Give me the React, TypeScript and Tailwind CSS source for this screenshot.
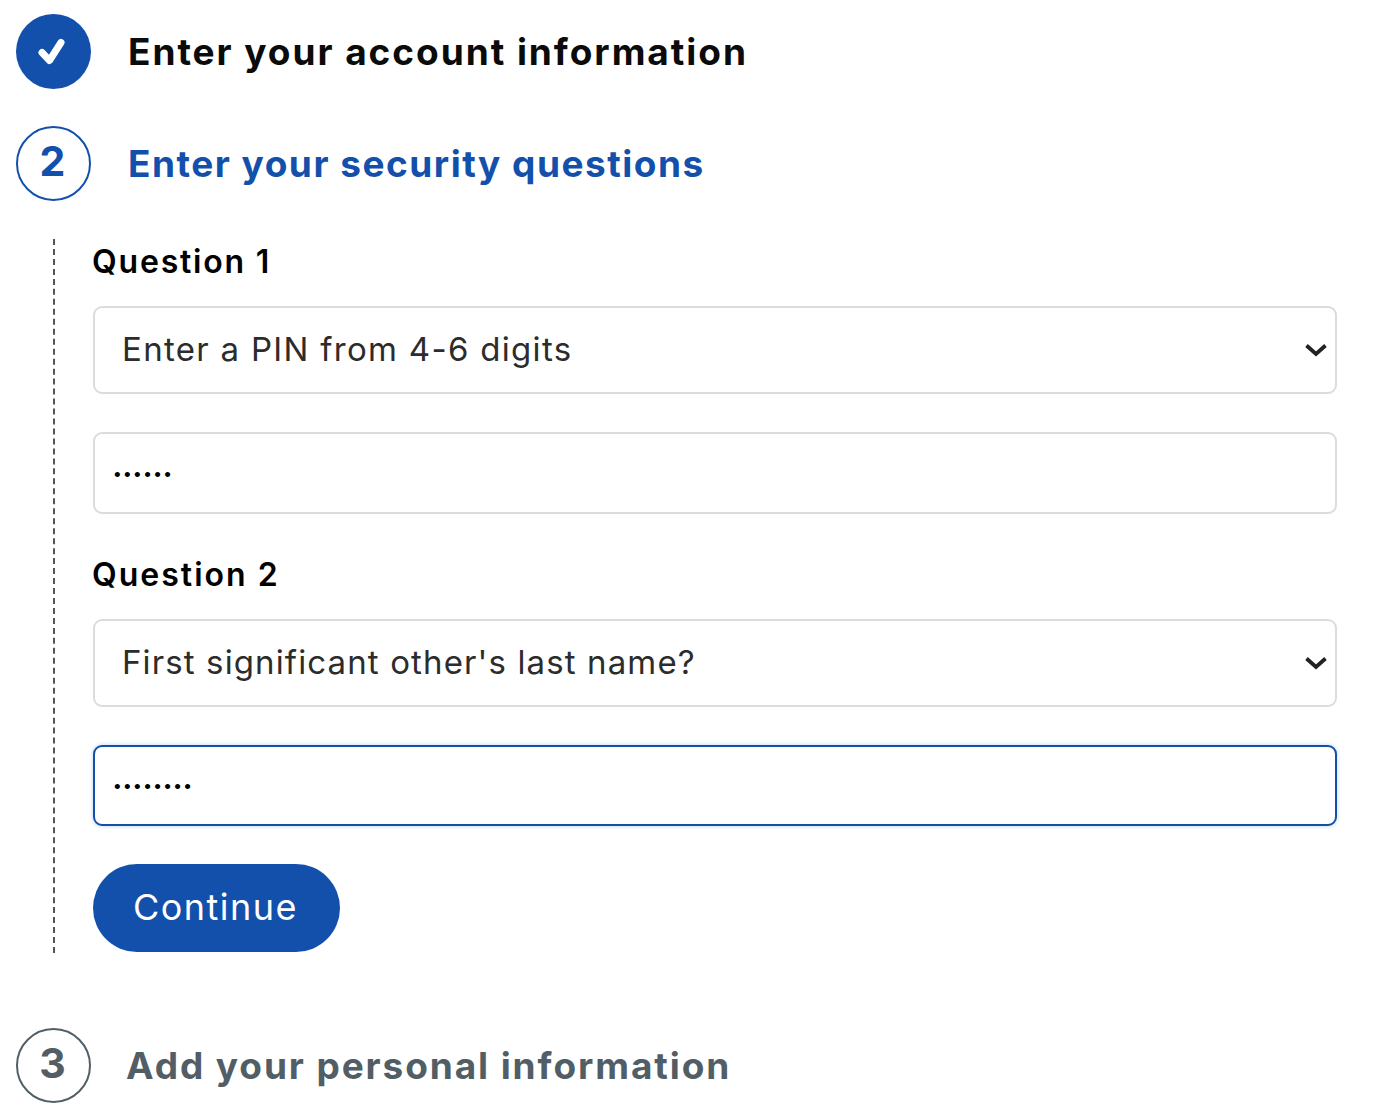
import React from "react";

const font = "font-['Inter','Liberation_Sans',sans-serif]";

function Chevron() {
  return (
    <svg className="absolute right-[10px] top-1/2 -translate-y-1/2 pointer-events-none" width="22" height="14" viewBox="0 0 22 14" fill="none">
      <path d="M1.5 2.5 L11 11 L20.5 2.5" stroke="#222" strokeWidth="3.8" />
    </svg>
  );
}

function Step({ mark, color, children }: { mark: React.ReactNode; color: string; children: string }) {
  return (
    <div className="flex items-center h-[75px]">
      {mark}
      <h2 className={`text-[37px] leading-none font-bold ${color}`}>{children}</h2>
    </div>
  );
}

function Question({ label, option, dots, focused, labelTracking, optionTracking, inputHeight }: { label: string; option: string; dots: string; focused?: boolean; labelTracking: string; optionTracking: string; inputHeight: string }) {
  return (
    <div className="flex flex-col">
      <label className={`text-[32px] leading-[40px] font-semibold text-black -ml-[1px] ${labelTracking}`}>{label}</label>
      <div className="relative mt-[24px] h-[88px]">
        <select
          defaultValue={option}
          className={`w-full h-full appearance-none bg-white border-2 border-[#dcdcdc] rounded-[9px] pl-[27px] text-[33px] text-[#2c2c2c] outline-none font-['Inter',sans-serif] ${optionTracking}`}
        >
          <option>{option}</option>
        </select>
        <Chevron />
      </div>
      <input
        type="password"
        defaultValue={dots}
        readOnly
        className={`mt-[38px] w-full bg-white rounded-[9px] pl-[19px] pt-[3px] text-[19px] tracking-[3.4px] text-black outline-none border-2 font-['Liberation_Sans',sans-serif] ${inputHeight} ${
          focused ? "border-[#1350ab] shadow-[0_0_4px_#bcd3f0]" : "border-[#dcdcdc]"
        }`}
      />
    </div>
  );
}

export default function App() {
  return (
    <div className={`w-[1388px] h-[1116px] bg-white overflow-hidden pl-[16px] pt-[14px] ${font}`}>
      <Step
        color="ml-[37px] text-[#0b0b0b] tracking-[1.95px]"
        mark={
          <div className="w-[75px] h-[75px] rounded-full bg-[#1350ab] flex items-center justify-center shrink-0 pr-[2px]">
            <svg width="32" height="30" viewBox="0 0 32 30" fill="none">
              <path d="M5 15.5 L12.5 23.5 L24 5.5" stroke="#fff" strokeWidth="7" strokeLinejoin="round" strokeLinecap="round" />
            </svg>
          </div>
        }
      >
        Enter your account information
      </Step>
      <div className="mt-[37px]">
        <Step
          color="ml-[37px] text-[#1350ab] tracking-[1.5px]"
          mark={
            <div className="w-[75px] h-[75px] rounded-full border-2 border-[#1350ab] flex items-center justify-center shrink-0 text-[41px] font-bold text-[#1350ab] pr-[2px] pb-[3px]">
              2
            </div>
          }
        >
          Enter your security questions
        </Step>
      </div>
      <div className="mt-[38px] ml-[37px] w-[1284px] h-[714px] border-l-2 border-dashed border-[#555] pl-[38px] pt-[3px] flex flex-col">
        <Question label="Question 1" labelTracking="tracking-[1.8px]" optionTracking="tracking-[1.3px]" inputHeight="h-[82px]" option="Enter a PIN from 4-6 digits" dots="123456" />
        <div className="mt-[41px]">
          <Question label="Question 2" labelTracking="tracking-[2px]" optionTracking="tracking-[1.12px]" inputHeight="h-[81px]" option="First significant other's last name?" dots="12345678" focused />
        </div>
        <button className="mt-[38px] w-[247px] h-[88px] rounded-full bg-[#1350ab] text-white text-[36px] font-normal tracking-[1.5px] pr-[2px] pb-[2px]">
          Continue
        </button>
      </div>
      <div className="mt-[75px]">
        <Step
          color="ml-[35px] text-[#525e66] tracking-[1.9px] -mt-[1px]"
          mark={
            <div className="w-[75px] h-[75px] rounded-full border-2 border-[#525e66] flex items-center justify-center shrink-0 text-[41px] font-bold text-[#525e66] pr-[2px] pb-[3px]">
              3
            </div>
          }
        >
          Add your personal information
        </Step>
      </div>
    </div>
  );
}
